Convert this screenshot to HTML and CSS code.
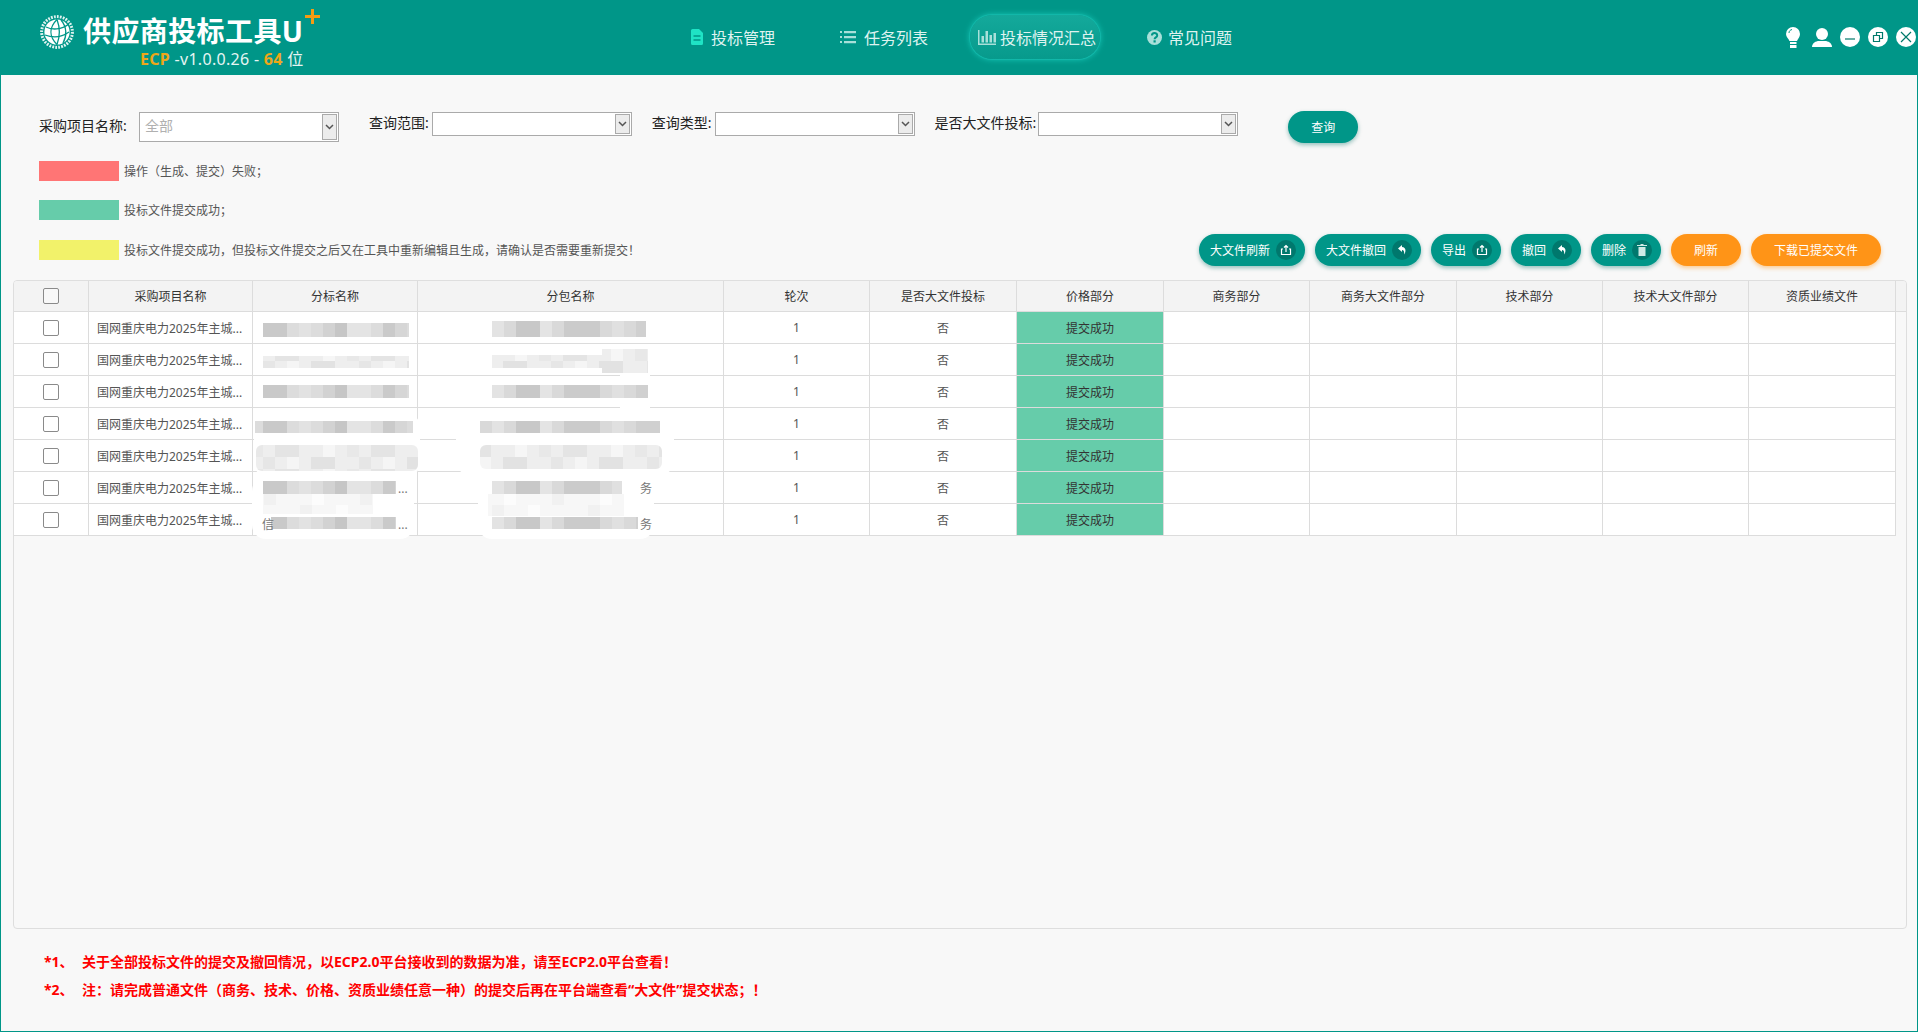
FILE: index.html
```html
<!DOCTYPE html>
<html lang="zh-CN">
<head>
<meta charset="utf-8">
<title>供应商投标工具U+</title>
<link rel="stylesheet" href="styles.css">
</head>
<body>
<div class="app">
  <header class="topbar">
    <div class="brand">
      <svg class="brand-logo" viewBox="0 0 34 34" width="34" height="34">
        <circle cx="17" cy="17" r="15.4" fill="none" stroke="#dff3f0" stroke-width="3" stroke-dasharray="1.8 1.2"/>
        <circle cx="17" cy="17" r="12.6" fill="#fff"/>
        <g fill="none" stroke="#009688" stroke-width="1.3">
          <path d="M6 12c6 3 15 3 23-3"/>
          <path d="M5 20c8 3 17 2 24-3"/>
          <path d="M17 4.500c-8 8-8 17 0 25"/>
          <path d="M17 4.500c3 8 3 17 0 25"/>
          <path d="M21 5c6 7 6 16 2 23"/>
        </g>
      </svg>
      <div class="brand-text">
        <div class="brand-title">供应商投标工具U<svg class="brand-plus" width="15" height="15" viewBox="0 0 15 15"><path stroke="#f39c12" stroke-width="3" d="M0 7.500h15M7.500 0v15"/></svg></div>
        <div class="brand-version"><b>ECP</b> -v1.0.0.26 - <b>64</b> 位</div>
      </div>
    </div>
    <nav class="nav">
      <a class="nav-item nav-first">
        <svg class="nav-icon" width="12" height="16" viewBox="0 0 12 16"><path fill="#1fe3c5" d="M1.500 0H8l4 4v10.500a1.500 1.500 0 0 1-1.500 1.500h-9A1.500 1.500 0 0 1 0 14.500v-13A1.500 1.500 0 0 1 1.500 0z"/><path stroke="#009688" stroke-width="1.500" d="M2.500 7h7M2.500 11h7"/></svg>
        投标管理
      </a>
      <a class="nav-item">
        <svg class="nav-icon" width="16" height="14" viewBox="0 0 16 14"><path fill="#a9e0d9" d="M0 1h2v2H0zM0 6h2v2H0zM0 11h2v2H0zM4 1h12v2.200H4zM4 6h12v2.200H4zM4 11h12v2.200H4z"/></svg>
        任务列表
      </a>
      <a class="nav-item nav-active">
        <svg class="nav-icon" width="18" height="15" viewBox="0 0 18 15"><path fill="#a9e0d9" d="M0 0h1.500v13.500H18V15H0zM3.500 6h2.500v6.500H3.500zM7.500 1h2.500v11.500H7.500zM11.500 5h2.500v7.500h-2.500zM15.500 3H18v9.500h-2.500z"/></svg>
        投标情况汇总
      </a>
      <a class="nav-item nav-help">
        <svg class="nav-icon" width="15" height="15" viewBox="0 0 15 15"><circle cx="7.500" cy="7.500" r="7.500" fill="#a9e0d9"/><path fill="none" stroke="#009688" stroke-width="2" d="M4.900 5.600c0-3.300 5.300-3.300 5.300-.2 0 2-2.600 2-2.600 3.900"/><rect x="6.500" y="10.300" width="2.200" height="2.200" fill="#009688"/></svg>
        常见问题
      </a>
    </nav>
    <div class="win-tools">
      <svg class="tool-bulb" width="14" height="21" viewBox="0 0 14 21"><path fill="#fff" d="M7 0a7 7 0 0 1 7 7c0 3-2 4.500-3 7H3.500C2.500 11.500 0 10 0 7a7 7 0 0 1 7-7z"/><path fill="none" stroke="#009688" stroke-width="1" d="M3 6c0-2 1.200-3 3-3.500"/><path fill="#fff" d="M4 15h6.500v2H4zM4 18h6.500v3H4z"/></svg>
      <svg class="tool-user" width="20" height="19" viewBox="0 0 20 19"><circle cx="10" cy="6" r="6" fill="#fff"/><path fill="#fff" d="M0 19c0-4 4-6 7-6h6c3 0 7 2 7 6z"/></svg>
      <svg width="20" height="20" viewBox="0 0 20 20"><circle cx="10" cy="10" r="10" fill="#fff"/><path stroke="#00796b" stroke-width="1.200" d="M5 12h10"/></svg>
      <svg width="20" height="20" viewBox="0 0 20 20"><circle cx="10" cy="10" r="10" fill="#fff"/><path fill="none" stroke="#00796b" stroke-width="1.200" d="M5.500 8.500h6v6h-6zM8.500 8.500v-3h6v6h-3"/></svg>
      <svg width="20" height="20" viewBox="0 0 20 20"><circle cx="10" cy="10" r="10" fill="#fff"/><path stroke="#00796b" stroke-width="1.200" d="M5 5l10 10M15 5L5 15"/></svg>
    </div>
  </header>

  <main class="content">
    <form class="filters">
      <div class="field">
        <label class="field-label label-wide">采购项目名称:</label>
        <div class="combo combo-tall"><span class="combo-value">全部</span><span class="combo-arrow"><svg width="9" height="6" viewBox="0 0 9 6"><path fill="none" stroke="#555" stroke-width="1.500" d="M1 1l3.500 3.500L8 1"/></svg></span></div>
      </div>
      <div class="field field-range">
        <label class="field-label">查询范围:</label>
        <div class="combo"><span class="combo-value"></span><span class="combo-arrow"><svg width="9" height="6" viewBox="0 0 9 6"><path fill="none" stroke="#555" stroke-width="1.500" d="M1 1l3.500 3.500L8 1"/></svg></span></div>
      </div>
      <div class="field field-type">
        <label class="field-label">查询类型:</label>
        <div class="combo"><span class="combo-value"></span><span class="combo-arrow"><svg width="9" height="6" viewBox="0 0 9 6"><path fill="none" stroke="#555" stroke-width="1.500" d="M1 1l3.500 3.500L8 1"/></svg></span></div>
      </div>
      <div class="field field-big">
        <label class="field-label">是否大文件投标:</label>
        <div class="combo"><span class="combo-value"></span><span class="combo-arrow"><svg width="9" height="6" viewBox="0 0 9 6"><path fill="none" stroke="#555" stroke-width="1.500" d="M1 1l3.500 3.500L8 1"/></svg></span></div>
      </div>
      <button type="button" class="pill pill-query">查询</button>
    </form>

    <div class="legend-row legend-first"><span class="swatch swatch-red"></span><span class="legend-text">操作（生成、提交）失败；</span></div>
    <div class="legend-row legend-second"><span class="swatch swatch-green"></span><span class="legend-text">投标文件提交成功；</span></div>
    <div class="action-row">
      <div class="legend-row"><span class="swatch swatch-yellow"></span><span class="legend-text">投标文件提交成功，但投标文件提交之后又在工具中重新编辑且生成，请确认是否需要重新提交！</span></div>
      <div class="actions">
        <button type="button" class="pill pill-icon">大文件刷新<span class="pill-badge"><svg width="12" height="12" viewBox="0 0 12 12"><path fill="none" stroke="#fff" stroke-width="1.200" d="M3 5H1.500v5.500h9V5H9M6 8V1.500M4 3.500l2-2 2 2"/></svg></span></button>
        <button type="button" class="pill pill-icon">大文件撤回<span class="pill-badge"><svg width="12" height="12" viewBox="0 0 12 12"><path fill="#fff" d="M6 1L2 4.500 6 8V6c1.800 0 2.600 1.500 2 4.500C10 8.500 10.500 3.300 6 3z"/></svg></span></button>
        <button type="button" class="pill pill-icon">导出<span class="pill-badge"><svg width="12" height="12" viewBox="0 0 12 12"><path fill="none" stroke="#fff" stroke-width="1.200" d="M3 5H1.500v5.500h9V5H9M6 8V1.500M4 3.500l2-2 2 2"/></svg></span></button>
        <button type="button" class="pill pill-icon">撤回<span class="pill-badge"><svg width="12" height="12" viewBox="0 0 12 12"><path fill="#fff" d="M6 1L2 4.500 6 8V6c1.800 0 2.600 1.500 2 4.500C10 8.500 10.500 3.300 6 3z"/></svg></span></button>
        <button type="button" class="pill pill-icon">删除<span class="pill-badge"><svg width="12" height="12" viewBox="0 0 12 12"><path fill="#cfe9e5" d="M4.500 0h3v1H11v1H1V1h3.500zM2.500 3h7v9h-7z"/></svg></span></button>
        <button type="button" class="pill pill-orange pill-refresh">刷新</button>
        <button type="button" class="pill pill-orange pill-download">下载已提交文件</button>
      </div>
    </div>

    <section class="grid">
      <table class="grid-table">
        <colgroup>
          <col class="c-check"><col class="c-project"><col class="c-lot"><col class="c-pack"><col class="c-round"><col class="c-big"><col class="c-price"><col class="c-biz"><col class="c-bizbig"><col class="c-tech"><col class="c-techbig"><col class="c-qual"><col class="c-stub">
        </colgroup>
        <thead>
          <tr>
            <th><span class="check"></span></th><th>采购项目名称</th><th>分标名称</th><th>分包名称</th><th>轮次</th><th>是否大文件投标</th><th>价格部分</th><th>商务部分</th><th>商务大文件部分</th><th>技术部分</th><th>技术大文件部分</th><th>资质业绩文件</th><th class="stub"></th>
          </tr>
        </thead>
        <tbody>
          <tr><td><span class="check"></span></td><td class="left">国网重庆电力2025年主城...</td><td></td><td></td><td>1</td><td>否</td><td class="ok">提交成功</td><td></td><td></td><td></td><td></td><td></td><td class="stub"></td></tr>
          <tr><td><span class="check"></span></td><td class="left">国网重庆电力2025年主城...</td><td></td><td></td><td>1</td><td>否</td><td class="ok">提交成功</td><td></td><td></td><td></td><td></td><td></td><td class="stub"></td></tr>
          <tr><td><span class="check"></span></td><td class="left">国网重庆电力2025年主城...</td><td></td><td></td><td>1</td><td>否</td><td class="ok">提交成功</td><td></td><td></td><td></td><td></td><td></td><td class="stub"></td></tr>
          <tr><td><span class="check"></span></td><td class="left">国网重庆电力2025年主城...</td><td></td><td></td><td>1</td><td>否</td><td class="ok">提交成功</td><td></td><td></td><td></td><td></td><td></td><td class="stub"></td></tr>
          <tr><td><span class="check"></span></td><td class="left">国网重庆电力2025年主城...</td><td></td><td></td><td>1</td><td>否</td><td class="ok">提交成功</td><td></td><td></td><td></td><td></td><td></td><td class="stub"></td></tr>
          <tr><td><span class="check"></span></td><td class="left">国网重庆电力2025年主城...</td><td></td><td></td><td>1</td><td>否</td><td class="ok">提交成功</td><td></td><td></td><td></td><td></td><td></td><td class="stub"></td></tr>
          <tr><td><span class="check"></span></td><td class="left">国网重庆电力2025年主城...</td><td></td><td></td><td>1</td><td>否</td><td class="ok">提交成功</td><td></td><td></td><td></td><td></td><td></td><td class="stub"></td></tr>
        </tbody>
      </table>
      <svg class="mosaic" viewBox="14 280 1892 647" width="1892" height="647" aria-hidden="true">
        <defs>
          <pattern id="m1" x="263" width="156" height="12" patternUnits="userSpaceOnUse">
            <rect width="156" height="12" fill="#dcdcdc"/>
            <rect width="24" height="12" fill="#c9c9c9"/><rect x="36" width="12" height="12" fill="#e2e2e2"/><rect x="60" width="12" height="12" fill="#d2d2d2"/><rect x="72" width="12" height="12" fill="#c6c6c6"/><rect x="84" width="24" height="12" fill="#e4e4e4"/><rect x="120" width="12" height="12" fill="#cacaca"/><rect x="132" width="12" height="12" fill="#d6d6d6"/>
          </pattern>
          <pattern id="m2" x="492" width="180" height="12" patternUnits="userSpaceOnUse">
            <rect width="180" height="12" fill="#d9d9d9"/>
            <rect width="12" height="12" fill="#e3e3e3"/><rect x="24" width="24" height="12" fill="#c8c8c8"/><rect x="48" width="12" height="12" fill="#e4e4e4"/><rect x="72" width="36" height="12" fill="#cbcbcb"/><rect x="120" width="12" height="12" fill="#e0e0e0"/><rect x="144" width="24" height="12" fill="#d0d0d0"/>
          </pattern>
          <pattern id="m3" x="263" width="96" height="24" patternUnits="userSpaceOnUse">
            <rect width="96" height="24" fill="#eeeeee"/>
            <rect width="12" height="12" fill="#e6e6e6"/><rect x="24" width="12" height="12" fill="#f5f5f5"/><rect x="48" width="24" height="12" fill="#e2e2e2"/><rect x="12" y="12" width="24" height="12" fill="#e4e4e4"/><rect x="60" y="12" width="12" height="12" fill="#f6f6f6"/><rect x="84" y="12" width="12" height="12" fill="#e8e8e8"/>
          </pattern>
          <pattern id="m4" x="0" width="96" height="24" patternUnits="userSpaceOnUse">
            <rect width="96" height="24" fill="#f7f7f7"/>
            <rect x="12" width="12" height="12" fill="#f1f1f1"/><rect x="48" width="12" height="12" fill="#fcfcfc"/><rect x="24" y="12" width="12" height="12" fill="#fcfcfc"/><rect x="72" y="12" width="12" height="12" fill="#f1f1f1"/>
          </pattern>
        </defs>

        <!-- smears covering the name columns -->
        <g fill="#fff">
          <rect x="254" y="412" width="166" height="64" rx="14"/>
          <rect x="252" y="476" width="162" height="62" rx="14"/>
          <rect x="456" y="408" width="218" height="66" rx="14"/>
          <rect x="478" y="474" width="176" height="64" rx="14"/>
          <rect x="620" y="346" width="30" height="80" rx="8"/>
        </g>

        <!-- row 1 -->
        <rect x="263" y="322" width="146" height="14" fill="url(#m1)"/>
        <rect x="492" y="320" width="154" height="16" fill="url(#m2)"/>
        <!-- row 2 -->
        <rect x="263" y="355" width="146" height="12" fill="url(#m3)"/>
        <rect x="492" y="354" width="110" height="13" fill="url(#m3)"/>
        <rect x="602" y="348" width="46" height="24" fill="url(#m3)"/>
        <!-- row 3 -->
        <rect x="263" y="384" width="146" height="13" fill="url(#m1)"/>
        <rect x="492" y="384" width="156" height="13" fill="url(#m2)"/>
        <!-- row 4 -->
        <rect x="255" y="420" width="158" height="12" fill="url(#m1)"/>
        <rect x="480" y="420" width="180" height="12" fill="url(#m2)"/>
        <!-- row 5 -->
        <rect x="256" y="444" width="162" height="26" rx="6" fill="url(#m3)"/>
        <rect x="480" y="444" width="182" height="24" rx="6" fill="url(#m3)"/>
        <!-- row 6 -->
        <rect x="263" y="480" width="133" height="13" fill="url(#m1)"/>
        <rect x="263" y="493" width="110" height="20" fill="url(#m4)"/>
        <rect x="492" y="480" width="130" height="13" fill="url(#m2)"/>
        <rect x="488" y="493" width="136" height="22" fill="url(#m4)"/>
        <!-- row 7 -->
        <rect x="271" y="516" width="125" height="12" fill="url(#m1)"/>
        <rect x="492" y="516" width="146" height="12" fill="url(#m2)"/>

        <g class="mosaic-text">
          <text x="398" y="492">...</text>
          <text x="398" y="528">...</text>
          <text x="262" y="528">信</text>
          <text x="640" y="492">务</text>
          <text x="640" y="528">务</text>
        </g>
      </svg>
    </section>

    <ol class="notes">
      <li><span class="note-no">*1、</span><span>关于全部投标文件的提交及撤回情况，以ECP2.0平台接收到的数据为准，请至ECP2.0平台查看！</span></li>
      <li><span class="note-no">*2、</span><span>注：请完成普通文件（商务、技术、价格、资质业绩任意一种）的提交后再在平台端查看“大文件”提交状态；！</span></li>
    </ol>
  </main>
</div>
</body>
</html>
```

FILE: styles.css
```css
* { box-sizing: border-box; }
html, body { margin: 0; padding: 0; height: 100%; }
body {
  font-family: "Noto Sans", "Noto Sans CJK SC", sans-serif;
  font-size: 12px;
  color: #333;
  background: #f8f8f8;
  overflow: hidden;
}
.app {
  height: 1032px;
  display: flex;
  flex-direction: column;
  border: 1px solid #009688;
  border-top: 0;
  background: #f8f8f8;
}

/* top bar */
.topbar {
  height: 75px;
  flex: none;
  margin: 0 -1px;
  background: #009688;
  display: flex;
  align-items: flex-start;
  position: relative;
}
.brand {
  width: 691px;
  flex: none;
  display: flex;
  padding: 15px 0 0 40px;
}
.brand-logo { flex: none; margin-right: 9px; }
.brand-text { flex: none; width: 260px; }
.brand-title {
  font-size: 28px;
  font-weight: 700;
  line-height: 34px;
  color: #fff;
  margin-top: -1px;
  position: relative;
  white-space: nowrap;
  letter-spacing: .4px;
}
.brand-plus {
  position: absolute;
  left: 222px;
  top: -5px;
}
.brand-version {
  font-size: 16px;
  line-height: 20px;
  color: #e6f5f3;
  margin: 1px 0 0 57px;
  white-space: nowrap;
  letter-spacing: .3px;
}
.brand-version b { color: #eda719; font-weight: 700; }

.nav {
  display: flex;
  align-items: center;
  height: 44px;
  margin-top: 15px;
}
.nav-item {
  display: flex;
  align-items: center;
  gap: 8px;
  font-size: 16px;
  color: #dff3f0;
  white-space: nowrap;
  margin-right: 42px;
}
.nav-first { margin-right: 65px; }
.nav-active {
  width: 130px;
  height: 44px;
  gap: 4px;
  padding-left: 8px;
  border-radius: 22px;
  background: linear-gradient(180deg, #14a99b, #079a8c);
  box-shadow: 0 0 0 1px #12b7a9, 0 0 6px #1bd0c0;
  margin-right: 45px;
}
.nav-help { gap: 6px; margin-left: 2px; }
.win-tools {
  position: absolute;
  top: 27px;
  right: 2px;
  display: flex;
  align-items: flex-start;
  gap: 8px;
}
.tool-bulb { margin-right: 4px; }
.tool-user { margin-top: 1px; }

/* content */
.content {
  flex: 1;
  padding: 37px 10px 0 12px;
  display: flex;
  flex-direction: column;
}
.filters {
  display: flex;
  align-items: flex-start;
  height: 30px;
  margin-left: 26px;
}
.field { display: flex; align-items: center; }
.field-label { font-size: 14px; line-height: 20px; color: #222; white-space: nowrap; padding-bottom: 2px; }
.label-wide { width: 100px; }
.field-range { margin-left: 30px; }
.field-type { margin-left: 20px; }
.field-big { margin-left: 20px; }
.field-label + .combo { margin-left: 3px; }
.label-wide + .combo { margin-left: 0; }
.field-big .combo { margin-left: 2px; }
.combo {
  width: 200px;
  height: 24px;
  display: flex;
  align-items: center;
  justify-content: space-between;
  padding: 0 1px 0 5px;
  background: #fff;
  border: 1px solid #aaa;
}
.combo-tall { height: 30px; }
.combo-value { font-size: 14px; line-height: 20px; color: #b0b0b0; padding-bottom: 3px; }
.combo-arrow {
  width: 15px;
  height: 20px;
  display: flex;
  align-items: center;
  justify-content: center;
  background: #ececec;
  border: 1px solid #aaa;
}
.combo-tall .combo-arrow { height: 26px; }

.pill {
  height: 32px;
  border: 0;
  border-radius: 16px;
  font: inherit;
  font-size: 12px;
  color: #fff;
  background: #009688;
  box-shadow: 0 2px 4px rgba(0, 110, 100, .4);
  padding: 0;
  flex: none;
  white-space: nowrap;
}
.pill-query { width: 70px; margin: -1px 0 0 50px; }
.pill-icon {
  display: inline-flex;
  align-items: center;
  padding: 0 9px 0 11px;
  justify-content: space-between;
}
.pill-badge {
  width: 20px;
  height: 20px;
  display: flex;
  align-items: center;
  justify-content: center;
  border-radius: 50%;
  background: #00786d;
}
.pill-orange { background: #ff9417; box-shadow: 0 2px 4px rgba(255, 148, 23, .45); }
.pill-refresh { width: 70px; }
.pill-download { width: 130px; }

.legend-row {
  display: flex;
  align-items: center;
  gap: 5px;
  height: 20px;
  color: #555;
  white-space: nowrap;
}
.legend-text { padding-bottom: 1px; }
.legend-first { margin: 19px 0 0 26px; }
.legend-second { margin: 19px 0 0 26px; }
.swatch { width: 80px; height: 20px; flex: none; }
.swatch-red { background: #ff7575; }
.swatch-green { background: #66ccaa; }
.swatch-yellow { background: #f2f26a; }

.action-row {
  display: flex;
  align-items: center;
  justify-content: space-between;
  height: 32px;
  margin: 14px 26px 0 26px;
}
.actions { display: flex; gap: 10px; }
.actions .pill-icon:nth-child(1), .actions .pill-icon:nth-child(2) { width: 106px; }
.actions .pill-icon:nth-child(3), .actions .pill-icon:nth-child(4), .actions .pill-icon:nth-child(5) { width: 70px; }

/* grid */
.grid {
  position: relative;
  width: 1894px;
  height: 649px;
  margin-top: 14px;
  background: #f8f8f8;
  border: 1px solid #dedede;
  border-radius: 4px;
  flex: none;
  overflow: hidden;
}
.grid-table {
  width: 1892px;
  table-layout: fixed;
  border-collapse: separate;
  border-spacing: 0;
}
.c-check { width: 75px; }
.c-project { width: 164px; }
.c-lot { width: 165px; }
.c-pack { width: 306px; }
.c-round { width: 146px; }
.c-big { width: 147px; }
.c-price { width: 147px; }
.c-biz { width: 146px; }
.c-bizbig { width: 147px; }
.c-tech { width: 146px; }
.c-techbig { width: 146px; }
.c-qual { width: 147px; }
.c-stub { width: 10px; }
.grid-table th, .grid-table td {
  height: 32px;
  padding: 0;
  text-align: center;
  font-size: 12px;
  font-weight: 400;
  vertical-align: middle;
  border-right: 1px solid #dcdcdc;
  border-bottom: 1px solid #dcdcdc;
  overflow: hidden;
  white-space: nowrap;
}
.grid-table th { height: 31px; padding-bottom: 1px; background: #f3f3f3; color: #333; }
.grid-table td { background: #fff; color: #555; }
.grid-table td.left { text-align: left; padding-left: 8px; }
.grid-table td.ok { background: #66ccaa; color: #333; }
.grid-table td.stub { background: transparent; border: 0; }
.grid-table th.stub { border-right: 0; }
.check {
  display: inline-block;
  vertical-align: middle;
  width: 16px;
  height: 16px;
  background: #fff;
  border: 1px solid #8a8a8a;
  border-radius: 2px;
}
th .check { background: #f8f8f8; }
.mosaic { position: absolute; left: 0; top: 0; pointer-events: none; }
.mosaic-text { font-size: 12px; fill: #777; }

/* notes */
.notes {
  list-style: none;
  margin: 19px 0 0;
  padding: 0 0 0 31px;
  color: #f00;
  font-size: 14px;
  font-weight: 700;
}
.notes li { display: flex; height: 28px; line-height: 28px; white-space: nowrap; }
.note-no { width: 38px; flex: none; }
```
